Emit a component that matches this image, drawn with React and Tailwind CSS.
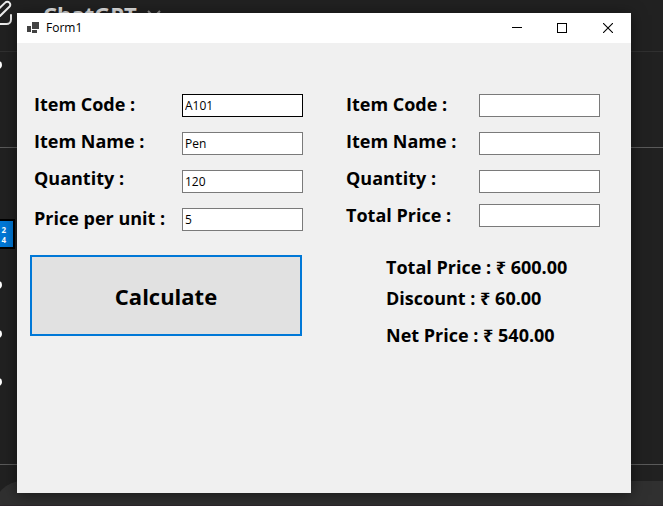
import React from "react";

const labelText = "text-[18px] leading-5 whitespace-nowrap";
const fieldBox =
  "block h-[23px] w-[121px] shrink-0 border bg-white px-[2px] pb-px text-[12px] text-black outline-none";

const orderFields = [
  { id: "code", label: "Item Code :", value: "A101", border: "border-black" },
  { id: "name", label: "Item Name :", value: "Pen", border: "border-[#7a7a7a]" },
  { id: "quantity", label: "Quantity :", value: "120", border: "border-[#7a7a7a]" },
  { id: "unit-price", label: "Price per unit :", value: "5", border: "border-[#7a7a7a]" },
];

const billFields = [
  { id: "bill-code", label: "Item Code :" },
  { id: "bill-name", label: "Item Name :" },
  { id: "bill-quantity", label: "Quantity :" },
];

function Backdrop() {
  return (
    <div className="absolute inset-0 overflow-hidden">
      <svg className="absolute left-0 top-0" width="16" height="28" viewBox="0 0 16 28" fill="none" stroke="#ececec" strokeWidth="2" strokeLinecap="round">
        <path d="M-4 11.500 5.200 2.600a2.900 2.900 0 0 1 4.200 0a2.900 2.900 0 0 1 0 4.200L0 16l-5 1" />
        <path d="M11 15v4.500a4.500 4.500 0 0 1-4.500 4.500H-4" />
      </svg>
      <div className="absolute left-[43px] top-0 flex items-end gap-[9px] text-[#e0e0e0]">
        <span className="text-[22px] font-bold leading-7">ChatGPT</span>
        <svg className="mb-2" width="16" height="10" viewBox="0 0 16 10" fill="none" stroke="#8f8f8f" strokeWidth="2">
          <path d="m2 1 6 6 6-6" />
        </svg>
      </div>
      <div className="absolute inset-x-0 top-[51px] h-px bg-[#303030]" />
      <div className="absolute inset-x-0 top-[147px] h-px bg-[#5a5a5a]" />
      <div className="absolute inset-x-0 top-[464px] h-px bg-[#5a5a5a]" />
      <div className="absolute -left-[6px] top-[61px] size-2 rounded-full bg-white" />
      <div className="absolute -left-[6px] top-[281px] size-2 rounded-full bg-white" />
      <div className="absolute -left-[6px] top-[330px] size-2 rounded-full bg-white" />
      <div className="absolute -left-[6px] top-[378px] size-2 rounded-full bg-white" />
      <div className="absolute -left-[16px] top-[219px] flex h-[30px] w-[31px] flex-col items-end justify-center border-2 border-black bg-[#0078d7] pr-[7px] pt-[2px] text-[8px] font-bold leading-[10px] text-white">
        <span>2</span>
        <span>4</span>
      </div>
      <div className="absolute -left-[6px] -right-10 top-[481px] h-14 rounded-[28px] bg-[#303030]" />
      <div className="absolute inset-x-0 bottom-0 h-px bg-[#2c262b]" />
    </div>
  );
}

function TitleBar() {
  return (
    <header className="flex h-[30px] shrink-0 items-center bg-white">
      <svg className="ml-[10px] shrink-0" width="12" height="12" viewBox="0 0 12 12" fill="#424242" shapeRendering="crispEdges">
        <rect x="5" y="0" width="7" height="7" />
        <rect x="0" y="4" width="4" height="6" />
        <rect x="5" y="8" width="5" height="3" />
      </svg>
      <h1 className="ml-[7px] flex-1 text-[12px] font-normal leading-4">Form1</h1>
      <button type="button" aria-label="Minimize" className="flex h-full w-[45px] items-center justify-center">
        <svg width="10" height="10" viewBox="0 0 10 10" shapeRendering="crispEdges">
          <rect y="4" width="10" height="1" />
        </svg>
      </button>
      <button type="button" aria-label="Maximize" className="flex h-full w-[46px] items-center justify-center">
        <svg width="10" height="10" viewBox="0 0 10 10" fill="none" stroke="#000" shapeRendering="crispEdges">
          <rect x="0.5" y="0.5" width="9" height="9" />
        </svg>
      </button>
      <button type="button" aria-label="Close" className="flex h-full w-[46px] items-center justify-center">
        <svg width="10" height="10" viewBox="0 0 10 10" fill="none" stroke="#000" strokeWidth="1.1">
          <path d="m0 0 10 10M10 0 0 10" />
        </svg>
      </button>
    </header>
  );
}

export default function App() {
  const unitPrice = orderFields[3];
  return (
    <div className="relative flex min-h-screen flex-col bg-[#212121] py-[13px] pl-[17px] pr-8 font-['Open_Sans','Noto_Sans',sans-serif] text-black">
      <Backdrop />
      <main className="relative flex flex-1 flex-col bg-[#f0f0f0] shadow-[0_2px_14px_rgba(0,0,0,0.5)]">
        <TitleBar />
        <form className="flex items-start gap-[43px] pl-[13px] pt-[51px]" onSubmit={(e) => e.preventDefault()}>
          <section className="flex flex-col gap-6">
            <div className="flex">
              <div className="flex w-[152px] flex-col gap-5 pl-1 font-bold">
                <div className="flex flex-col gap-[17px]">
                  {orderFields.slice(0, 3).map((f) => (
                    <label key={f.id} htmlFor={f.id} className={labelText}>
                      {f.label}
                    </label>
                  ))}
                </div>
                <label htmlFor={unitPrice.id} className={labelText}>
                  {unitPrice.label}
                </label>
              </div>
              <div className="flex flex-col gap-[15px]">
                {orderFields.map((f) => (
                  <input key={f.id} id={f.id} defaultValue={f.value} className={`${fieldBox} ${f.border}`} />
                ))}
              </div>
            </div>
            <button type="submit" className="h-[81px] w-[272px] border-2 border-[#0078d7] bg-[#e1e1e1] pt-[2px] text-[22px] font-bold">
              Calculate
            </button>
          </section>

          <section className="flex flex-col gap-7">
            <div className="flex">
              <div className="flex w-[133px] flex-col gap-[17px] font-bold">
                {billFields.map((f) => (
                  <label key={f.id} htmlFor={f.id} className={labelText}>
                    {f.label}
                  </label>
                ))}
                <label htmlFor="bill-total" className={labelText}>
                  Total Price :
                </label>
              </div>
              <div className="flex flex-col gap-[11px]">
                <div className="flex flex-col gap-[15px]">
                  {billFields.map((f) => (
                    <input key={f.id} id={f.id} className={`${fieldBox} border-[#7a7a7a]`} />
                  ))}
                </div>
                <input id="bill-total" className={`${fieldBox} border-[#7a7a7a]`} />
              </div>
            </div>
            <div className="flex flex-col gap-[13px] pl-10 text-[18px] font-bold leading-6">
              <div className="flex flex-col gap-[7px]">
                <p>Total Price : ₹ 600.00</p>
                <p>Discount : ₹ 60.00</p>
              </div>
              <p>Net Price : ₹ 540.00</p>
            </div>
          </section>
        </form>
      </main>
    </div>
  );
}
